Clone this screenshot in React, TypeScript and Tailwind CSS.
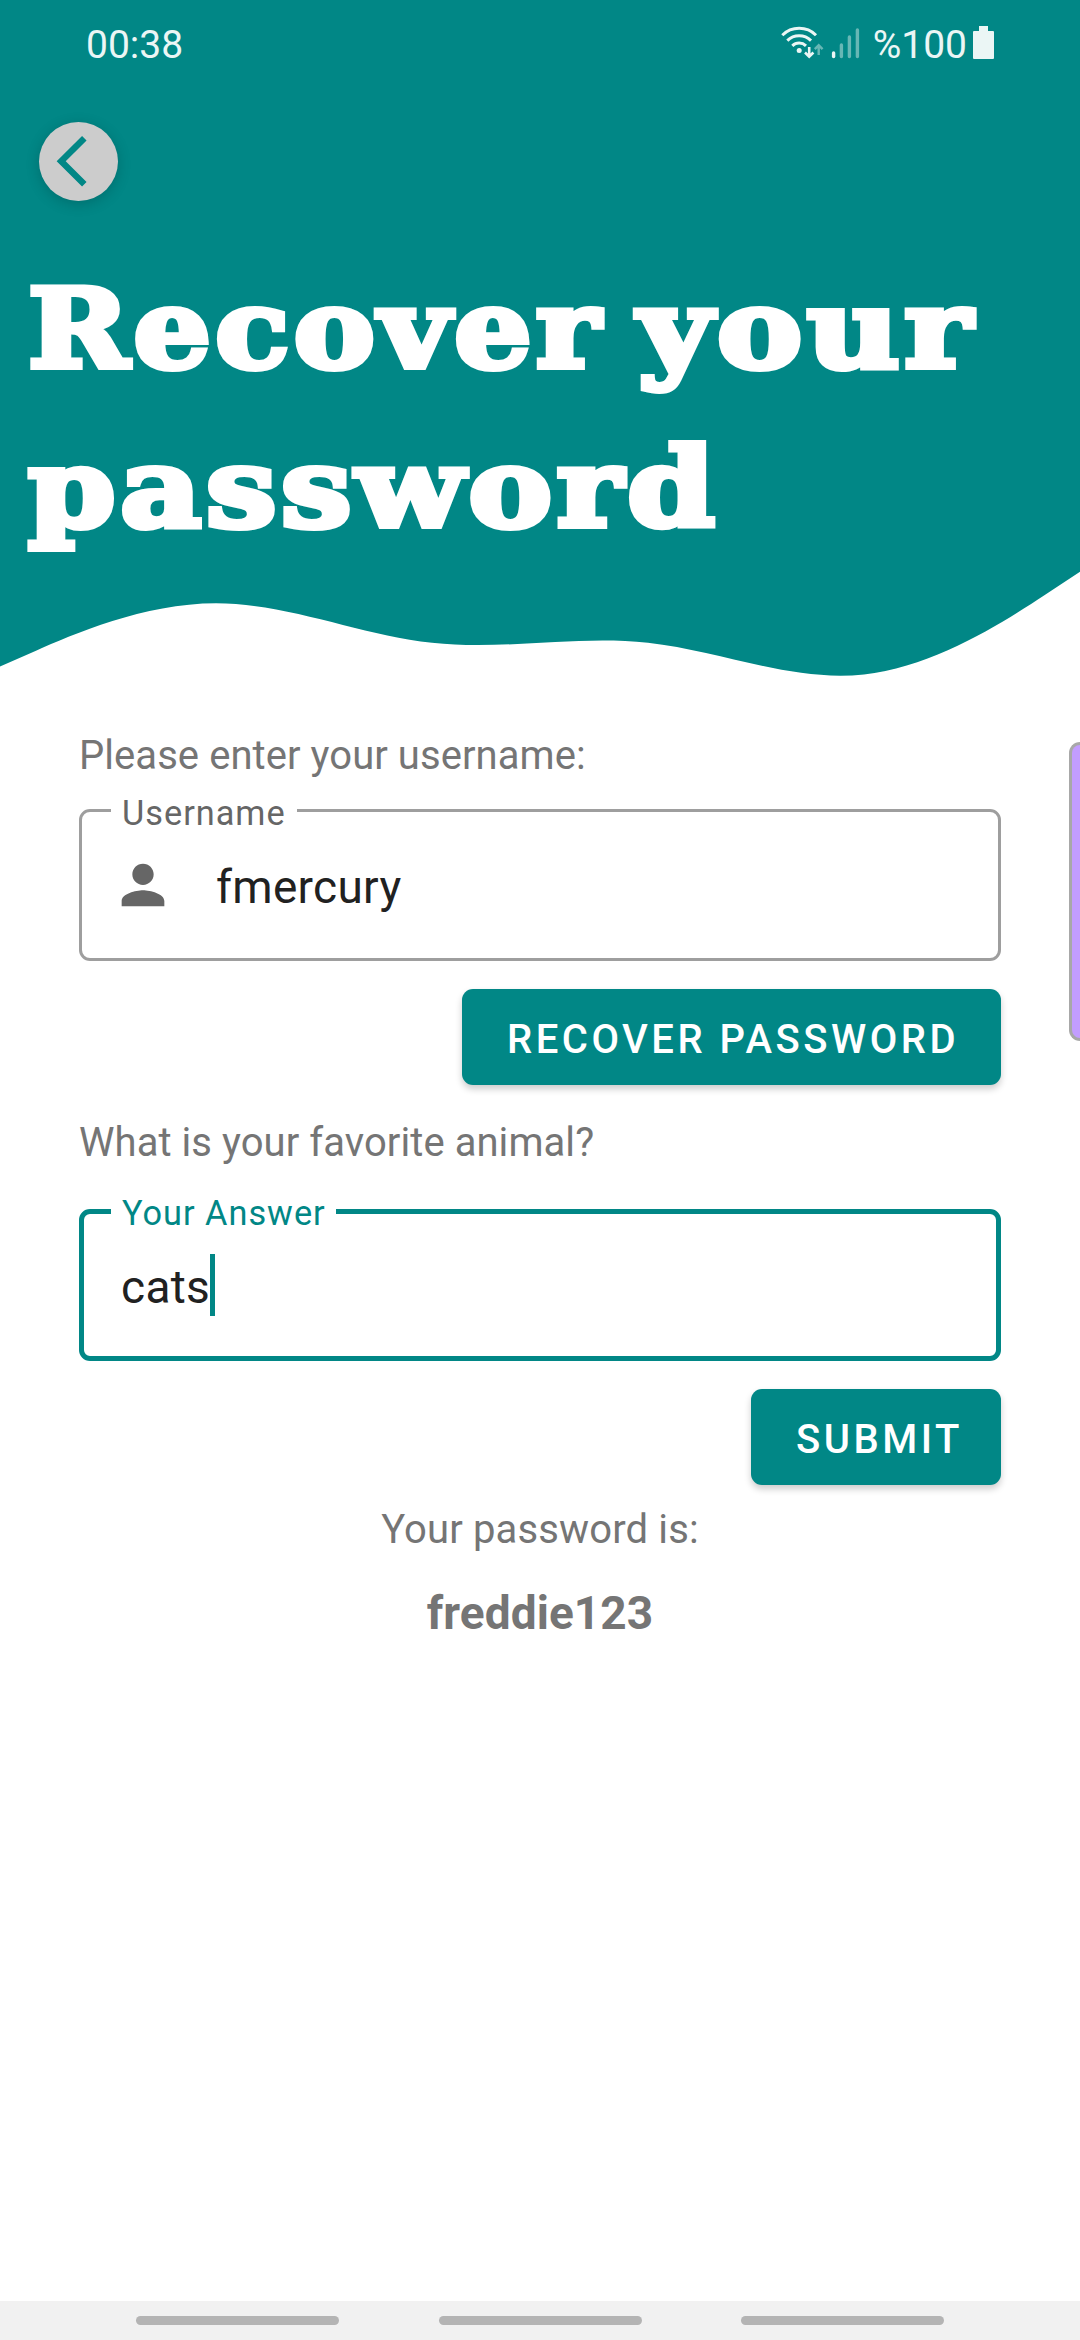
import type { ReactNode } from 'react';

function StatusBar() {
  return (
    <div className="flex h-[86px] items-start justify-between pl-[86px] pr-[86px] pt-[20px] text-[39px] leading-[46px] text-[#ebf6f5]">
      <span className="pt-[2px]">00:38</span>
      <div className="flex items-start">
        <svg width="82" height="40" viewBox="0 0 82 40" className="mt-[4px]" fill="none">
          <g stroke="#ebf6f5" strokeWidth="3" strokeLinecap="butt">
            <path d="M2.3 11.2 A 24 24 0 0 1 36 11.2" />
            <path d="M7.3 16.6 A 17 17 0 0 1 31 16.6" />
            <path d="M12.3 21.8 A 10 10 0 0 1 26 21.8" />
          </g>
          <circle cx="19.2" cy="26.6" r="2.5" fill="#ebf6f5" />
          <path d="M29.2 23v9M25 28.5l4.2 4.2 4.2-4.2" stroke="#ebf6f5" strokeWidth="2.6" />
          <path d="M38.7 31v-9.5M34.8 25.2l3.9-3.9 3.9 3.9" stroke="#67b7b5" strokeWidth="2.4" />
          <g strokeWidth="3.4" strokeLinecap="round">
            <path d="M53.6 29v3.6" stroke="#ebf6f5" />
            <path d="M61.4 21v11.6M69.4 13v19.6M77.4 6v26.6" stroke="#67b7b5" />
          </g>
        </svg>
        <span className="ml-[11px] pt-[2px]">%100</span>
        <svg width="21" height="33" viewBox="0 0 21 33" className="ml-[6px] mt-[6px]" fill="#ebf6f5">
          <path d="M6 0h9v5h5q1 0 1 1v26q0 1-1 1H1q-1 0-1-1V6q0-1 1-1h5z" />
        </svg>
      </div>
    </div>
  );
}

function Header() {
  return (
    <header className="relative h-[677px] w-full">
      <svg className="absolute inset-0" width="1080" height="677" viewBox="0 0 1080 677" fill="#018786">
        <path d="M0 0H1080V571.7L1044 595.4C1008 619.1 936 666.5 864 674.4C792 682.3 720 650.7 648 642.8C576 634.9 504 650.7 432 642.8C360 634.9 288 603.3 216 603.3C144 603.3 72 634.9 36 650.7L0 666.5Z" />
      </svg>
      <div className="relative">
        <StatusBar />
        <button className="ml-[39px] mt-[36px] flex h-[79px] w-[79px] items-center justify-center rounded-full bg-[#cccccc] shadow-[0_3px_14px_rgba(0,0,0,0.18)]">
          <svg width="79" height="79" viewBox="0 0 79 79" fill="none">
            <path d="M45.3 16.3 22.2 39.3 45.3 62.3" stroke="#018786" strokeWidth="6.4" />
          </svg>
        </button>
        <h1 className="ml-[28px] mt-[49px] font-['DejaVu_Serif',serif] text-[109px] font-bold leading-[159px] tracking-[4px] text-white [-webkit-text-stroke:6px_white]">
          <span className="flex whitespace-nowrap">
            <span className="origin-left scale-x-[1.115]">Recover</span>
            <span className="ml-[93px] origin-left scale-x-[1.172]">your</span>
          </span>
          <span className="block w-fit origin-left scale-x-[1.149]">password</span>
        </h1>
      </div>
    </header>
  );
}

function Button({ children, className }: { children: string; className: string }) {
  return (
    <button
      className={`flex h-[96px] items-center self-end rounded-[11px] bg-[#018786] pl-[45px] pt-[5px] text-[40px] font-medium tracking-[3.5px] whitespace-nowrap text-white shadow-[0_4px_7px_rgba(0,0,0,0.2)] ${className}`}
    >
      {children}
    </button>
  );
}

function Field({ label, labelClass, frameClass, children }: { label: string; labelClass: string; frameClass: string; children: ReactNode }) {
  return (
    <div className={`relative flex h-[152px] items-center rounded-[11px] ${frameClass}`}>
      <span className={`absolute bg-white pl-[11px] text-[34.3px] leading-[40px] tracking-[1px] whitespace-nowrap ${labelClass}`}>{label}</span>
      {children}
    </div>
  );
}

export default function App() {
  return (
    <div className="relative flex h-[2340px] w-[1080px] flex-col overflow-hidden bg-white font-['Roboto',sans-serif]">
      <Header />
      <main className="flex flex-1 flex-col pl-[79px] pr-[79px] pt-[56px] text-[40px] leading-[46px] tracking-[0.06px] text-[#757575]">
        <p>Please enter your username:</p>
        <Field label="Username" frameClass="mt-[30px] border-[3px] border-[#9e9e9e]" labelClass="left-[29px] top-[-19px] w-[186px] text-[#666666]">
          <svg width="64" height="64" viewBox="0 0 24 24" className="ml-[29px]" fill="#666666">
            <path d="M12 12c2.21 0 4-1.79 4-4s-1.79-4-4-4-4 1.79-4 4 1.79 4 4 4zm0 2c-2.67 0-8 1.34-8 4v2h16v-2c0-2.66-5.33-4-8-4z" />
          </svg>
          <span className="ml-[41px] pt-[4px] text-[46px] tracking-[0.3px] text-[#212121]">fmercury</span>
        </Field>
        <Button className="mt-[28px] w-[539px]">RECOVER PASSWORD</Button>
        <p className="mt-[35px]">What is your favorite animal?</p>
        <Field label="Your Answer" frameClass="mt-[43px] border-[5px] border-[#018786]" labelClass="left-[27px] top-[-21px] w-[225px] text-[#018786]">
          <span className="ml-[37px] pt-[4px] text-[46px] tracking-[0.3px] text-[#212121]">cats</span>
          <span className="h-[62px] w-[5px] bg-[#018786]" />
        </Field>
        <Button className="mt-[28px] w-[250px]">SUBMIT</Button>
        <p className="mt-[22px] text-center tracking-[0.15px]">Your password is:</p>
        <p className="mt-[37px] text-center text-[46px] font-bold">freddie123</p>
      </main>
      <nav className="flex h-[39px] items-center gap-[99.5px] bg-[#f1f1f1] pl-[136px]">
        <span className="h-[9px] w-[203px] rounded-[5px] bg-[#b4b4b4]" />
        <span className="h-[9px] w-[203px] rounded-[5px] bg-[#b4b4b4]" />
        <span className="h-[9px] w-[203px] rounded-[5px] bg-[#b4b4b4]" />
      </nav>
      <div className="absolute right-0 top-[742px] h-[299px] w-[11px] rounded-l-[11px] border-y-[3px] border-l-[3px] border-[#a8a8a8] bg-[#c29dff]" />
    </div>
  );
}
